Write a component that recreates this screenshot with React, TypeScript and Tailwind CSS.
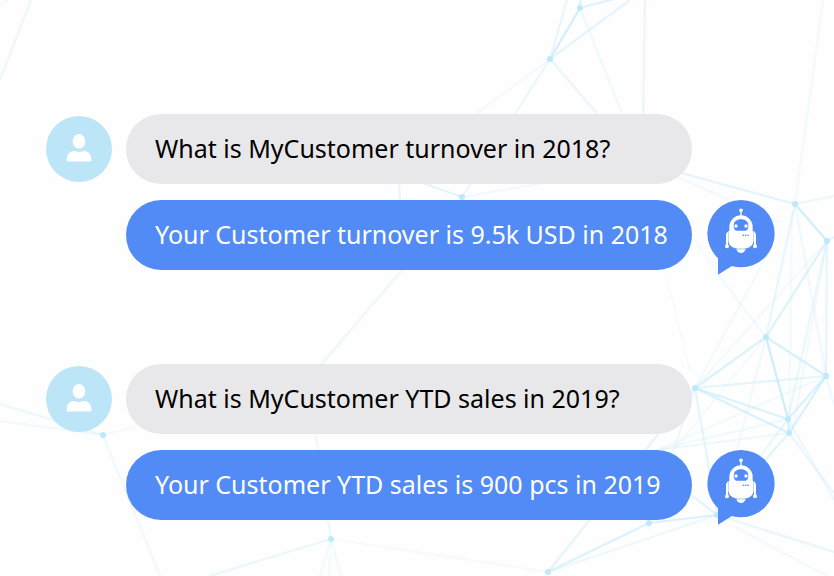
const nodes: [number, number][] = [
  [580, 8], [550, 59], [462, 197], [795, 204], [827, 241], [766, 337], [826, 376],
  [695, 388], [788, 419], [789, 433], [717, 515], [649, 523], [548, 572], [331, 539], [103, 435],
];

// x1, y1, x2, y2, opacity
const links: [number, number, number, number, number][] = [
  [580, 8, 550, 59, 0.8], [580, 8, 581, -4, 0.6], [580, 8, 625, -4, 0.6], [550, 59, 567, 0, 0.4],
  [550, 59, 630, 0, 0.45], [550, 59, 470, 118, 0.2], [550, 59, 462, 197, 0.35], [550, 59, 640, 163, 0.4],
  [580, 8, 630, 134, 0.25], [645, 0, 643, 120, 0.35], [823, 0, 795, 204, 0.2],
  [670, 170, 795, 204, 0.5], [670, 174, 780, 222, 0.2], [795, 204, 834, 196, 0.35],
  [795, 204, 827, 241, 0.8], [827, 241, 834, 237, 0.4], [795, 204, 766, 337, 0.4],
  [827, 241, 766, 337, 0.6], [827, 241, 826, 376, 0.4], [795, 204, 826, 376, 0.25],
  [827, 241, 788, 419, 0.35], [827, 241, 792, 433, 0.2], [792, 210, 789, 433, 0.15],
  [827, 241, 695, 388, 0.2], [770, 250, 695, 388, 0.2], [766, 337, 826, 376, 0.7],
  [766, 337, 695, 388, 0.65], [766, 337, 788, 419, 0.9], [766, 337, 737, 450, 0.2],
  [766, 337, 676, 447, 0.15], [720, 277, 766, 337, 0.2], [695, 388, 826, 376, 0.45],
  [695, 388, 788, 419, 0.6], [695, 388, 789, 433, 0.65], [826, 376, 788, 419, 0.65],
  [826, 376, 789, 433, 0.7], [826, 376, 834, 405, 0.25], [788, 419, 789, 433, 0.7],
  [788, 419, 660, 449, 0.25], [789, 433, 650, 451, 0.3], [826, 376, 660, 449, 0.2],
  [788, 419, 717, 515, 0.35], [789, 433, 717, 515, 0.5], [788, 419, 834, 500, 0.3],
  [789, 433, 834, 493, 0.35], [695, 388, 717, 515, 0.45], [695, 388, 670, 460, 0.3],
  [695, 388, 548, 572, 0.45], [717, 515, 690, 494, 0.5], [717, 515, 649, 523, 0.65],
  [717, 515, 834, 552, 0.4], [735, 527, 834, 580, 0.2], [649, 523, 548, 572, 0.6],
  [717, 515, 548, 572, 0.3], [667, 277, 690, 370, 0.12], [695, 240, 720, 277, 0.15],
  [462, 197, 420, 182, 0.5], [462, 197, 560, 180, 0.25], [399, 180, 400, 205, 0.4],
  [402, 270, 320, 366, 0.3], [315, 430, 331, 539, 0.3], [331, 539, 209, 576, 0.35],
  [331, 539, 320, 576, 0.2], [331, 539, 329, 576, 0.15], [331, 539, 341, 576, 0.2],
  [331, 539, 548, 572, 0.15], [103, 435, 0, 421, 0.25], [103, 435, 0, 404, 0.3],
  [103, 435, 135, 427, 0.2], [103, 435, 160, 576, 0.25], [31, 0, 0, 80, 0.3], [7, 0, 0, 7, 0.2],
];

function NetworkBackdrop() {
  return (
    <svg
      className="absolute inset-0 h-full w-full"
      viewBox="0 0 834 576"
      preserveAspectRatio="xMidYMid slice"
      aria-hidden="true"
    >
      {links.map(([x1, y1, x2, y2, opacity], i) => (
        <line key={i} x1={x1} y1={y1} x2={x2} y2={y2} stroke="#c8ecfc" strokeWidth="2.2" opacity={opacity} />
      ))}
      {nodes.map(([cx, cy], i) => (
        <circle key={i} cx={cx} cy={cy} r="3" fill="#bfe8fb" />
      ))}
    </svg>
  );
}

function UserAvatar() {
  return (
    <svg className="h-[66px] w-[66px] shrink-0 self-center" viewBox="0 0 66 66" role="img" aria-label="User">
      <circle cx="33" cy="33" r="33" fill="#bce5f7" />
      <ellipse cx="33" cy="25.3" rx="6.3" ry="7.3" fill="#fff" />
      <path
        d="M22.2 45.6c-1.200 0-1.500-.6-1.500-1.600 0-5.500 3-9 7-9 1.800 0 3 1 5.300 1s3.500-1 5.300-1c4 0 7.200 3.500 7.200 9 0 1-.4 1.600-1.500 1.600z"
        fill="#fff"
      />
    </svg>
  );
}

function BotAvatar() {
  return (
    <svg className="h-[75px] w-[68px] shrink-0" viewBox="51 30 204 225" role="img" aria-label="Bot">
      <circle cx="153" cy="131" r="101" fill="#528bf6" />
      <path d="M84 190v64l43-27z" fill="#528bf6" />
      <g fill="#fff">
        <circle cx="153" cy="61" r="5.500" />
        <rect x="151" y="62" width="4" height="16" />
        <path d="M118 123v-12a35 35 0 0 1 70 0v12z" />
        <path d="M115 123h76v28c0 15-13 25-30 25h-16c-17 0-30-10-30-25z" />
        <path d="M139 178h28c-2 7-7 11-14 11s-12-4-14-11z" />
        <path d="M108 132l6-8v41h-6zM198 132l-6-8v41h6z" />
        <circle cx="111" cy="169" r="6" />
        <circle cx="195" cy="169" r="6" />
      </g>
      <path d="M131 107c0-12 9-19 22-19s22 7 22 19c0 9-4 15-10 15h-24c-6 0-10-6-10-15z" fill="#528bf6" />
      <circle cx="138" cy="108" r="5" fill="#fff" />
      <circle cx="168" cy="108" r="5" fill="#fff" />
      <g fill="#528bf6">
        <circle cx="160" cy="136" r="2.500" />
        <circle cx="167" cy="136" r="2.500" />
        <circle cx="174" cy="136" r="2.500" />
      </g>
    </svg>
  );
}

const exchanges = [
  { question: "What is MyCustomer turnover in 2018?", answer: "Your Customer turnover is 9.5k USD in 2018" },
  { question: "What is MyCustomer YTD sales in 2019?", answer: "Your Customer YTD sales is 900 pcs in 2019" },
];

export default function App() {
  return (
    <main className="relative min-h-screen overflow-hidden bg-[#fefefe] font-['Noto_Sans','Open_Sans',sans-serif] text-[25px] leading-[30px]">
      <NetworkBackdrop />
      <div className="relative flex flex-col gap-[89px] pt-[114px] pr-[59px] pl-[46px]">
        {exchanges.map(({ question, answer }) => (
          <section key={question} className="flex flex-col gap-4">
            <div className="flex gap-[14px] pr-[83px]">
              <UserAvatar />
              <p className="flex h-[70px] min-w-0 flex-1 items-center rounded-full bg-[#e8e8ea] px-[29px] pb-0.5 whitespace-nowrap text-black">
                {question}
              </p>
            </div>
            <div className="flex gap-[15px] pl-20">
              <p className="flex h-[70px] min-w-0 flex-1 items-center rounded-full bg-[#528bf6] px-[29px] pb-0.5 whitespace-nowrap text-white">
                {answer}
              </p>
              <BotAvatar />
            </div>
          </section>
        ))}
      </div>
    </main>
  );
}
